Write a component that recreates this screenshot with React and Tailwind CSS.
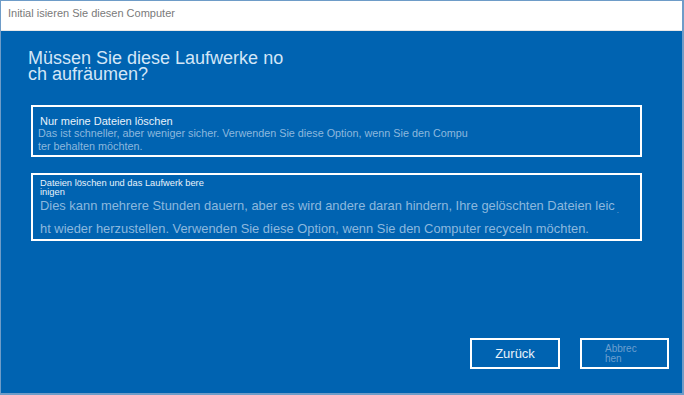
import React from "react";

const OptionBox = ({ title, children, className }) => (
    <button className={`block w-[611px] text-left border-2 border-white ${className}`}>
        {title}
        {children}
    </button>
);

const App = () => {
    return (
        <div className="w-[684px] h-[395px] bg-[#6e9cc8] p-px font-['Liberation_Sans',Arial,sans-serif] overflow-hidden">
            <div className="flex flex-col w-[681px] h-[392px] bg-[#0063b1]">
                <div className="h-[30px] bg-white border-b border-[#e8e8e8] pl-[7px] pt-[6px] text-[11px] leading-[13px] text-[#7a7a7a]">
                    Initial isieren Sie diesen Computer
                </div>

                <div className="flex-1 flex flex-col pl-[27px]">
                    <h1 className="mt-[19px] text-[18px] leading-[16px] text-[#d3e6f7]">
                        Müssen Sie diese Laufwerke no
                        <br />
                        ch aufräumen?
                    </h1>

                    <OptionBox
                        className="mt-[23px] ml-[3px] h-[52px] pl-[5px] pt-[6px]"
                        title={<div className="pl-[2px] text-[11px] leading-[12px] text-[#e8f2fb]">Nur meine Dateien löschen</div>}
                    >
                        <div className="text-[10.8px] leading-[13px] text-[#8cb8de]">
                            Das ist schneller, aber weniger sicher. Verwenden Sie diese Option, wenn Sie den Compu
                            <br />
                            ter behalten möchten.
                        </div>
                    </OptionBox>

                    <OptionBox
                        className="mt-[16px] ml-[3px] h-[68px] pl-[7px] pt-[3px]"
                        title={
                            <div className="text-[9.3px] leading-[9px] text-[#e8f2fb]">
                                Dateien löschen und das Laufwerk bere
                                <br />
                                inigen
                            </div>
                        }
                    >
                        <div className="text-[12.9px] leading-[21px] text-[#8cb8de] -mt-[2px]">
                            Dies kann mehrere Stunden dauern, aber es wird andere daran hindern, Ihre gelöschten Dateien leic
                            <span className="relative top-[3px] left-[2px] text-[8px]">.</span>
                            <br />
                            ht wieder herzustellen. Verwenden Sie diese Option, wenn Sie den Computer recyceln möchten.
                        </div>
                    </OptionBox>

                    <div className="flex justify-end gap-[20px] mt-auto mb-[24px] mr-[13px]">
                        <button className="w-[90px] h-[31px] border-2 border-white text-[13px] text-[#e8f2fb]">
                            Zurück
                        </button>
                        <button className="w-[89px] h-[31px] border-2 border-white text-left pl-[23px] text-[10px] leading-[10px] text-[#6b9fcf]">
                            Abbrec
                            <br />
                            hen
                        </button>
                    </div>
                </div>
            </div>
        </div>
    );
};

export default App;
